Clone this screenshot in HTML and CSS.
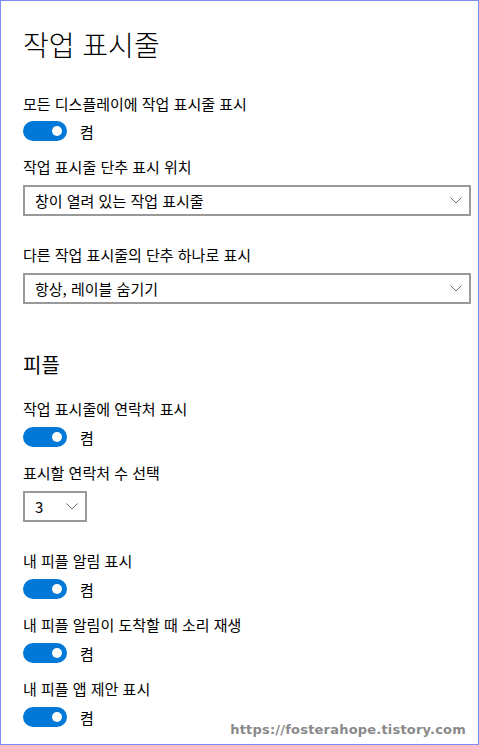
FILE: index.html
```html
<!DOCTYPE html>
<html lang="ko">
<head>
    <meta charset="UTF-8">
    <meta name="viewport" content="width=device-width, initial-scale=1.0">
    <title>작업 표시줄</title>
    <link rel="stylesheet" href="styles.css">
</head>
<body>

    <div class="page">
        <h1 class="title">작업 표시줄</h1>

        <div class="label first">모든 디스플레이에 작업 표시줄 표시</div>
        <div class="toggle-row"><span class="toggle"></span><span class="state">켬</span></div>

        <div class="label after-toggle">작업 표시줄 단추 표시 위치</div>
        <div class="combo wide"><span>창이 열려 있는 작업 표시줄</span><svg class="chev" width="12" height="7" viewBox="0 0 12 7"><path d="M0.5 0.5 L6 6 L11.5 0.5" fill="none" stroke="#666" stroke-width="1"/></svg></div>

        <div class="label after-combo">다른 작업 표시줄의 단추 하나로 표시</div>
        <div class="combo wide"><span>항상, 레이블 숨기기</span><svg class="chev" width="12" height="7" viewBox="0 0 12 7"><path d="M0.5 0.5 L6 6 L11.5 0.5" fill="none" stroke="#666" stroke-width="1"/></svg></div>

        <h2 class="section">피플</h2>

        <div class="label first-in-section">작업 표시줄에 연락처 표시</div>
        <div class="toggle-row"><span class="toggle"></span><span class="state">켬</span></div>

        <div class="label after-toggle">표시할 연락처 수 선택</div>
        <div class="combo small"><span>3</span><svg class="chev" width="12" height="7" viewBox="0 0 12 7"><path d="M0.5 0.5 L6 6 L11.5 0.5" fill="none" stroke="#666" stroke-width="1"/></svg></div>

        <div class="label after-combo">내 피플 알림 표시</div>
        <div class="toggle-row"><span class="toggle"></span><span class="state">켬</span></div>

        <div class="label after-toggle">내 피플 알림이 도착할 때 소리 재생</div>
        <div class="toggle-row"><span class="toggle"></span><span class="state">켬</span></div>

        <div class="label after-toggle">내 피플 앱 제안 표시</div>
        <div class="toggle-row"><span class="toggle"></span><span class="state">켬</span></div>

        <div class="watermark">https://fosterahope.tistory.com</div>
    </div>

</body>
</html>
```

FILE: styles.css
```css
* { box-sizing: border-box; }
body { margin: 0; background: #fff; font-family: "Noto Sans CJK KR", "Noto Sans", sans-serif; color: #000; }
.page { position: relative; width: 479px; height: 745px; border: 1px solid #7b8cf5; padding: 23px 7px 0 22px; overflow: hidden; }

.title { margin: 0; font-size: 28px; font-weight: 300; line-height: 40px; }
.section { margin: 47px 0 0; font-size: 20px; font-weight: 400; line-height: 28px; }

.label { font-size: 15px; line-height: 20px; margin-bottom: 8px; }
.label.first { margin-top: 30px; margin-bottom: 7px; }
.label.after-toggle { margin-top: 16px; }
.label.after-combo { margin-top: 29px; }
.label.first-in-section { margin-top: 20px; }

.toggle-row { display: flex; align-items: center; height: 20px; }
.toggle { position: relative; width: 44px; height: 20px; border-radius: 10px; background: #0078d7; }
.toggle::after { content: ""; position: absolute; right: 5px; top: 5px; width: 10px; height: 10px; border-radius: 50%; background: #fff; }
.state { margin-left: 13px; font-size: 15px; }

.combo { display: flex; align-items: center; justify-content: space-between; height: 31px; border: 2px solid #999; padding: 0 7px 0 10px; font-size: 15px; }
.combo.wide { width: 448px; }
.combo.small { width: 64px; }
.chev { display: block; }

.watermark { position: absolute; right: 12px; bottom: 7px; font-family: "DejaVu Sans", sans-serif; font-weight: bold; font-size: 13px; color: #8a8a8a; letter-spacing: 0.2px;
    text-shadow: 1px 0 #fff, -1px 0 #fff, 0 1px #fff, 0 -1px #fff, 1px 1px #fff, -1px -1px #fff, 1px -1px #fff, -1px 1px #fff; }
```
